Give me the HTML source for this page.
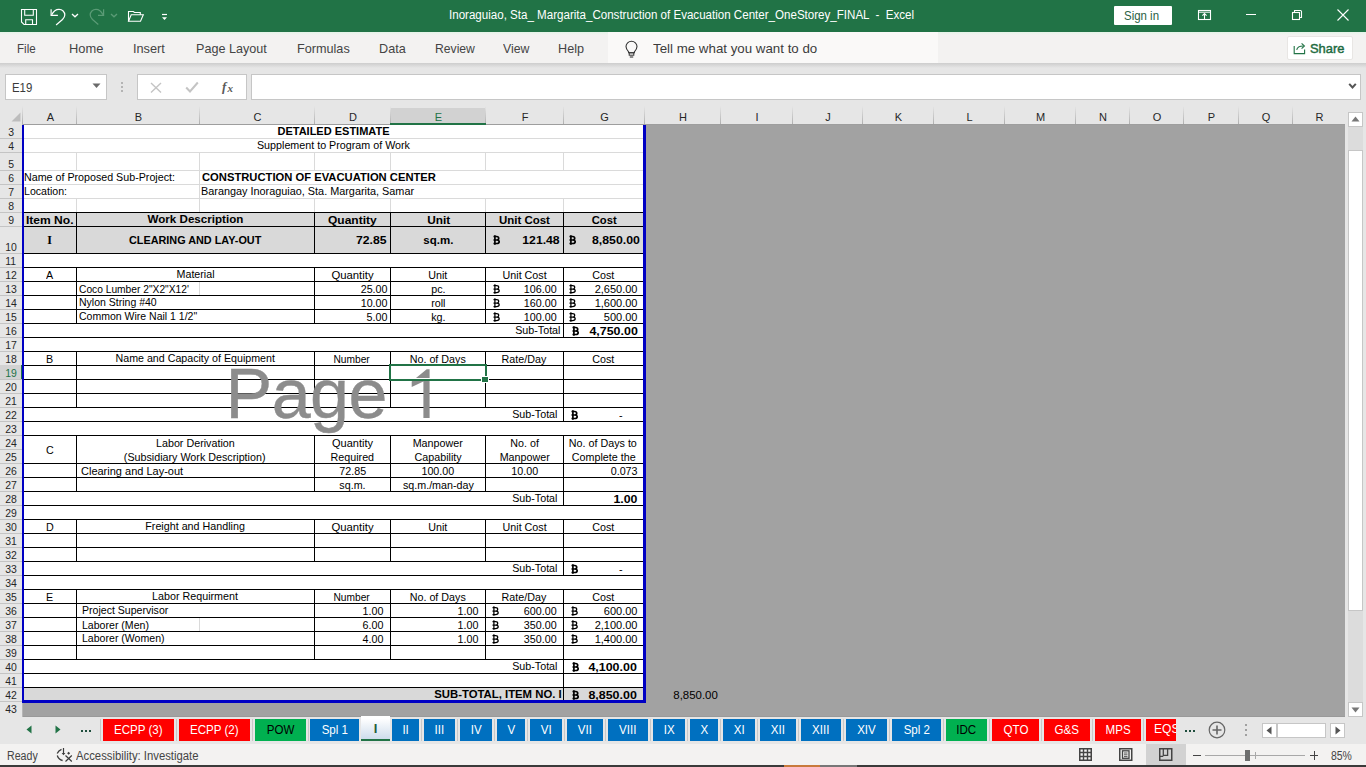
<!DOCTYPE html>
<html><head><meta charset="utf-8"><title>Excel</title>
<style>
html,body{margin:0;padding:0;}
body{width:1366px;height:767px;overflow:hidden;position:relative;background:#e6e6e6;font-family:'Liberation Sans', sans-serif;}
.a{position:absolute;}
.t{position:absolute;white-space:pre;}
</style></head><body>
<div class="a" style="left:0px;top:0px;width:1366px;height:32px;background:#217346;"></div><svg class="a" style="left:20px;top:8px;" width="18" height="18" viewBox="0 0 18 18"><path d="M1.5 1.5 H16.5 V16.5 H4 L1.5 14 Z" fill="none" stroke="#ffffff" stroke-width="1.1"/><path d="M4.7 1.5 V7.2 H13.3 V1.5" fill="none" stroke="#ffffff" stroke-width="1.1"/><path d="M5.7 16.5 V11.8 H12.5 V16.5" fill="none" stroke="#ffffff" stroke-width="1.1"/></svg><svg class="a" style="left:49px;top:8px;" width="18" height="18" viewBox="0 0 18 18"><path d="M2.7 6.8 C 4.5 3, 7.5 1.3, 10 1.3 C 13.3 1.3, 15.8 3.8, 15.8 7 C 15.8 8.8, 15 10, 13.5 11.5 L7.1 17" fill="none" stroke="#ffffff" stroke-width="1.2"/><path d="M2.1 1.3 V7.4 H8.9" fill="none" stroke="#ffffff" stroke-width="1.2"/></svg><svg class="a" style="left:71px;top:12px;" width="8" height="6" viewBox="0 0 8 6"><path d="M1 2 L4 4.8 L7 2" fill="none" stroke="#ffffff" stroke-width="1.3"/></svg><svg class="a" style="left:88px;top:8px;" width="18" height="18" viewBox="0 0 18 18"><path d="M15 6.8 C 13.2 3, 10.5 1.3, 8 1.3 C 4.7 1.3, 2.2 3.8, 2.2 7 C 2.2 8.8, 3 10, 4.5 11.5 L10.3 16.5" fill="none" stroke="#5b9b76" stroke-width="1.2"/><path d="M15.6 1.3 V7.4 H10" fill="none" stroke="#5b9b76" stroke-width="1.2"/></svg><svg class="a" style="left:110px;top:12px;" width="8" height="6" viewBox="0 0 8 6"><path d="M1 2 L4 4.8 L7 2" fill="none" stroke="#5b9b76" stroke-width="1.3"/></svg><svg class="a" style="left:127px;top:9px;" width="18" height="15" viewBox="0 0 18 15"><path d="M1.5 12.3 V2.5 H6.3 L7.5 3.5 H13.3 V5.8" fill="none" stroke="#ffffff" stroke-width="1.1"/><path d="M1.5 12.3 L4.2 5.8 H16.3 L13.5 12.3 Z" fill="none" stroke="#ffffff" stroke-width="1.1"/></svg><svg class="a" style="left:160px;top:12px;" width="10" height="10" viewBox="0 0 10 10"><path d="M2 2.5 H7" stroke="#ffffff" stroke-width="1.2"/><path d="M2 5.2 H7 L4.5 8 Z" fill="#ffffff"/></svg><div class="t" style="left:449px;top:8px;font-family:'Liberation Sans', sans-serif;font-size:12px;font-weight:normal;line-height:14px;color:#ffffff;transform:scaleX(0.964);transform-origin:left top;">Inoraguiao, Sta_ Margarita_Construction of Evacuation Center_OneStorey_FINAL  -  Excel</div><div class="a" style="left:1114px;top:6px;width:58px;height:19px;background:#ffffff;border-radius:1px;"></div><div class="t" style="left:1124px;top:9px;font-family:'Liberation Sans', sans-serif;font-size:12px;font-weight:normal;line-height:14px;color:#2b5f45;transform:scaleX(0.955);transform-origin:left top;">Sign in</div><svg class="a" style="left:1197px;top:9px;" width="15" height="13" viewBox="0 0 15 13"><rect x="1.5" y="1.5" width="12" height="9" fill="none" stroke="#ffffff" stroke-width="1.1"/><path d="M1.5 3.2 H13.5" stroke="#ffffff" stroke-width="1"/><path d="M7.5 10.5 V4.6 M5.4 6.6 L7.5 4.5 L9.6 6.6" fill="none" stroke="#ffffff" stroke-width="1.1"/></svg><div class="a" style="left:1246px;top:14px;width:10px;height:1px;background:#ffffff;"></div><svg class="a" style="left:1291px;top:9px;" width="13" height="13" viewBox="0 0 13 13"><rect x="1.5" y="3.5" width="7" height="7" fill="none" stroke="#ffffff" stroke-width="1.1"/><path d="M3.5 3.5 V1.5 H9.5 Q10.5 1.5 10.5 2.5 V8.5 H8.5" fill="none" stroke="#ffffff" stroke-width="1.1"/></svg><svg class="a" style="left:1337px;top:9px;" width="13" height="13" viewBox="0 0 13 13"><path d="M0.5 0.5 L11.5 11.5 M11.5 0.5 L0.5 11.5" stroke="#ffffff" stroke-width="1.1"/></svg><div class="a" style="left:0px;top:32px;width:1366px;height:31px;background:#f3f2f1;"></div><div class="a" style="left:0px;top:32px;width:1366px;height:3px;background:linear-gradient(#e4f4e8,#f3f2f1);"></div><div class="t" style="left:17px;top:42px;font-family:'Liberation Sans', sans-serif;font-size:13px;font-weight:normal;line-height:14px;color:#444444;transform:scaleX(0.89);transform-origin:left top;">File</div><div class="t" style="left:69px;top:42px;font-family:'Liberation Sans', sans-serif;font-size:13px;font-weight:normal;line-height:14px;color:#444444;transform:scaleX(0.99);transform-origin:left top;">Home</div><div class="t" style="left:133px;top:42px;font-family:'Liberation Sans', sans-serif;font-size:13px;font-weight:normal;line-height:14px;color:#444444;transform:scaleX(0.98);transform-origin:left top;">Insert</div><div class="t" style="left:196px;top:42px;font-family:'Liberation Sans', sans-serif;font-size:13px;font-weight:normal;line-height:14px;color:#444444;transform:scaleX(0.97);transform-origin:left top;">Page Layout</div><div class="t" style="left:297px;top:42px;font-family:'Liberation Sans', sans-serif;font-size:13px;font-weight:normal;line-height:14px;color:#444444;transform:scaleX(0.973);transform-origin:left top;">Formulas</div><div class="t" style="left:379px;top:42px;font-family:'Liberation Sans', sans-serif;font-size:13px;font-weight:normal;line-height:14px;color:#444444;transform:scaleX(0.972);transform-origin:left top;">Data</div><div class="t" style="left:435px;top:42px;font-family:'Liberation Sans', sans-serif;font-size:13px;font-weight:normal;line-height:14px;color:#444444;transform:scaleX(0.936);transform-origin:left top;">Review</div><div class="t" style="left:503px;top:42px;font-family:'Liberation Sans', sans-serif;font-size:13px;font-weight:normal;line-height:14px;color:#444444;transform:scaleX(0.944);transform-origin:left top;">View</div><div class="t" style="left:558px;top:42px;font-family:'Liberation Sans', sans-serif;font-size:13px;font-weight:normal;line-height:14px;color:#444444;transform:scaleX(0.972);transform-origin:left top;">Help</div><div class="a" style="left:608px;top:32px;width:330px;height:31px;background:#faf9f8;"></div><svg class="a" style="left:624px;top:40px;" width="16" height="18" viewBox="0 0 16 18"><path d="M4.6 11.8 C 3 10.2, 2 8.6, 2 6.6 C 2 3.6, 4.5 1.2, 7.5 1.2 C 10.5 1.2, 13 3.6, 13 6.6 C 13 8.6, 12 10.2, 10.4 11.8 V12.8 H4.6 Z" fill="none" stroke="#333" stroke-width="1.1"/><rect x="5.2" y="12.8" width="4.6" height="2.4" fill="none" stroke="#333" stroke-width="1"/><path d="M5.8 17 H9.2" stroke="#333" stroke-width="1.1"/></svg><div class="t" style="left:653px;top:42px;font-family:'Liberation Sans', sans-serif;font-size:13px;font-weight:normal;line-height:14px;color:#3c3c3c;transform:scaleX(1.024);transform-origin:left top;">Tell me what you want to do</div><div class="a" style="left:1287px;top:36px;width:66px;height:24px;background:#ffffff;border:1px solid #e8e6e4;box-sizing:border-box;border-radius:2px;"></div><svg class="a" style="left:1292px;top:41px;" width="16" height="14" viewBox="0 0 16 14"><path d="M2.2 5 V12.6 H12.6 V8.6" fill="none" stroke="#217346" stroke-width="1.1"/><path d="M4.7 8.8 C 5.2 6.2, 7.5 5, 11.5 5" fill="none" stroke="#217346" stroke-width="1.1"/><path d="M9.6 2.4 L12.4 5 L9.6 7.6" fill="none" stroke="#217346" stroke-width="1.1"/></svg><div class="t" style="left:1310px;top:42px;font-family:'Liberation Sans', sans-serif;font-size:13px;font-weight:normal;line-height:14px;color:#1e6b41;transform:scaleX(0.99);transform-origin:left top;-webkit-text-stroke:0.45px #1e6b41;">Share</div><div class="a" style="left:0px;top:63px;width:1366px;height:5px;background:linear-gradient(#cdcdcd,#e6e6e6);"></div><div class="a" style="left:5px;top:74px;width:102px;height:26px;background:#ffffff;border:1px solid #c6c6c6;box-sizing:border-box;"></div><div class="t" style="left:12px;top:81px;font-family:'Liberation Sans', sans-serif;font-size:12px;font-weight:normal;line-height:14px;color:#3a3a3a;transform:scaleX(0.95);transform-origin:left top;">E19</div><svg class="a" style="left:92px;top:83px;" width="9" height="6" viewBox="0 0 9 6"><path d="M0.5 0.5 H8.5 L4.5 5 Z" fill="#6a6a6a"/></svg><div class="a" style="left:121px;top:82px;width:2px;height:2px;background:#b4b4b4;"></div><div class="a" style="left:121px;top:86px;width:2px;height:2px;background:#b4b4b4;"></div><div class="a" style="left:121px;top:90px;width:2px;height:2px;background:#b4b4b4;"></div><div class="a" style="left:137px;top:74px;width:110px;height:26px;background:#ffffff;border:1px solid #c6c6c6;box-sizing:border-box;"></div><svg class="a" style="left:150px;top:82px;" width="12" height="11" viewBox="0 0 12 11"><path d="M1 1 L11 10.5 M11 1 L1 10.5" stroke="#c4c4c4" stroke-width="1.4"/></svg><svg class="a" style="left:185px;top:81px;" width="14" height="12" viewBox="0 0 14 12"><path d="M1.2 6.5 L5 10.5 L12.8 1.5" fill="none" stroke="#c4c4c4" stroke-width="2"/></svg><div class="t" style="left:222px;top:80px;font-family:'Liberation Serif', serif;font-size:13px;font-weight:bold;line-height:14px;color:#5a5a5a;font-style:italic;">f</div><div class="t" style="left:227.5px;top:81px;font-family:'Liberation Serif', serif;font-size:11px;font-weight:bold;line-height:14px;color:#5a5a5a;font-style:italic;">x</div><div class="a" style="left:251px;top:74px;width:1110px;height:26px;background:#ffffff;border:1px solid #c6c6c6;box-sizing:border-box;"></div><svg class="a" style="left:1348px;top:82px;" width="9" height="8" viewBox="0 0 9 8"><path d="M1.2 1.8 L4.5 5.5 L7.8 1.8" fill="none" stroke="#555" stroke-width="2"/></svg><div class="a" style="left:0px;top:108px;width:1345px;height:17px;background:#e6e6e6;"></div><div class="a" style="left:390px;top:108px;width:95px;height:17px;background:#d2d2d2;"></div><div class="a" style="left:390px;top:123px;width:96px;height:2px;background:#217346;"></div><div class="t" style="left:-249.5px;width:600px;text-align:center;top:110px;font-family:'Liberation Sans', sans-serif;font-size:11px;font-weight:normal;line-height:14px;color:#262626;"><span style="display:inline-block;">A</span></div><div class="t" style="left:-161.5px;width:600px;text-align:center;top:110px;font-family:'Liberation Sans', sans-serif;font-size:11px;font-weight:normal;line-height:14px;color:#262626;"><span style="display:inline-block;">B</span></div><div class="a" style="left:76px;top:106px;width:1px;height:18px;background:linear-gradient(#e6e6e6,#b0b0b0);"></div><div class="t" style="left:-42.5px;width:600px;text-align:center;top:110px;font-family:'Liberation Sans', sans-serif;font-size:11px;font-weight:normal;line-height:14px;color:#262626;"><span style="display:inline-block;">C</span></div><div class="a" style="left:199px;top:106px;width:1px;height:18px;background:linear-gradient(#e6e6e6,#b0b0b0);"></div><div class="t" style="left:53.0px;width:600px;text-align:center;top:110px;font-family:'Liberation Sans', sans-serif;font-size:11px;font-weight:normal;line-height:14px;color:#262626;"><span style="display:inline-block;">D</span></div><div class="a" style="left:314px;top:106px;width:1px;height:18px;background:linear-gradient(#e6e6e6,#b0b0b0);"></div><div class="t" style="left:138.5px;width:600px;text-align:center;top:110px;font-family:'Liberation Sans', sans-serif;font-size:11px;font-weight:normal;line-height:14px;color:#217346;"><span style="display:inline-block;">E</span></div><div class="a" style="left:390px;top:106px;width:1px;height:18px;background:linear-gradient(#e6e6e6,#b0b0b0);"></div><div class="t" style="left:225.0px;width:600px;text-align:center;top:110px;font-family:'Liberation Sans', sans-serif;font-size:11px;font-weight:normal;line-height:14px;color:#262626;"><span style="display:inline-block;">F</span></div><div class="a" style="left:485px;top:106px;width:1px;height:18px;background:linear-gradient(#e6e6e6,#b0b0b0);"></div><div class="t" style="left:304.5px;width:600px;text-align:center;top:110px;font-family:'Liberation Sans', sans-serif;font-size:11px;font-weight:normal;line-height:14px;color:#262626;"><span style="display:inline-block;">G</span></div><div class="a" style="left:563px;top:106px;width:1px;height:18px;background:linear-gradient(#e6e6e6,#b0b0b0);"></div><div class="t" style="left:383.0px;width:600px;text-align:center;top:110px;font-family:'Liberation Sans', sans-serif;font-size:11px;font-weight:normal;line-height:14px;color:#262626;"><span style="display:inline-block;">H</span></div><div class="a" style="left:644px;top:106px;width:1px;height:18px;background:linear-gradient(#e6e6e6,#b0b0b0);"></div><div class="t" style="left:457.0px;width:600px;text-align:center;top:110px;font-family:'Liberation Sans', sans-serif;font-size:11px;font-weight:normal;line-height:14px;color:#262626;"><span style="display:inline-block;">I</span></div><div class="a" style="left:720px;top:106px;width:1px;height:18px;background:linear-gradient(#e6e6e6,#b0b0b0);"></div><div class="t" style="left:528.0px;width:600px;text-align:center;top:110px;font-family:'Liberation Sans', sans-serif;font-size:11px;font-weight:normal;line-height:14px;color:#262626;"><span style="display:inline-block;">J</span></div><div class="a" style="left:792px;top:106px;width:1px;height:18px;background:linear-gradient(#e6e6e6,#b0b0b0);"></div><div class="t" style="left:598.5px;width:600px;text-align:center;top:110px;font-family:'Liberation Sans', sans-serif;font-size:11px;font-weight:normal;line-height:14px;color:#262626;"><span style="display:inline-block;">K</span></div><div class="a" style="left:862px;top:106px;width:1px;height:18px;background:linear-gradient(#e6e6e6,#b0b0b0);"></div><div class="t" style="left:669.5px;width:600px;text-align:center;top:110px;font-family:'Liberation Sans', sans-serif;font-size:11px;font-weight:normal;line-height:14px;color:#262626;"><span style="display:inline-block;">L</span></div><div class="a" style="left:933px;top:106px;width:1px;height:18px;background:linear-gradient(#e6e6e6,#b0b0b0);"></div><div class="t" style="left:740.5px;width:600px;text-align:center;top:110px;font-family:'Liberation Sans', sans-serif;font-size:11px;font-weight:normal;line-height:14px;color:#262626;"><span style="display:inline-block;">M</span></div><div class="a" style="left:1004px;top:106px;width:1px;height:18px;background:linear-gradient(#e6e6e6,#b0b0b0);"></div><div class="t" style="left:803.0px;width:600px;text-align:center;top:110px;font-family:'Liberation Sans', sans-serif;font-size:11px;font-weight:normal;line-height:14px;color:#262626;"><span style="display:inline-block;">N</span></div><div class="a" style="left:1075px;top:106px;width:1px;height:18px;background:linear-gradient(#e6e6e6,#b0b0b0);"></div><div class="t" style="left:857.0px;width:600px;text-align:center;top:110px;font-family:'Liberation Sans', sans-serif;font-size:11px;font-weight:normal;line-height:14px;color:#262626;"><span style="display:inline-block;">O</span></div><div class="a" style="left:1129px;top:106px;width:1px;height:18px;background:linear-gradient(#e6e6e6,#b0b0b0);"></div><div class="t" style="left:911.5px;width:600px;text-align:center;top:110px;font-family:'Liberation Sans', sans-serif;font-size:11px;font-weight:normal;line-height:14px;color:#262626;"><span style="display:inline-block;">P</span></div><div class="a" style="left:1183px;top:106px;width:1px;height:18px;background:linear-gradient(#e6e6e6,#b0b0b0);"></div><div class="t" style="left:966.0px;width:600px;text-align:center;top:110px;font-family:'Liberation Sans', sans-serif;font-size:11px;font-weight:normal;line-height:14px;color:#262626;"><span style="display:inline-block;">Q</span></div><div class="a" style="left:1238px;top:106px;width:1px;height:18px;background:linear-gradient(#e6e6e6,#b0b0b0);"></div><div class="t" style="left:1019.5px;width:600px;text-align:center;top:110px;font-family:'Liberation Sans', sans-serif;font-size:11px;font-weight:normal;line-height:14px;color:#262626;"><span style="display:inline-block;">R</span></div><div class="a" style="left:1292px;top:106px;width:1px;height:18px;background:linear-gradient(#e6e6e6,#b0b0b0);"></div><div class="a" style="left:22px;top:106px;width:1px;height:18px;background:linear-gradient(#e6e6e6,#b0b0b0);"></div><div class="a" style="left:0px;top:124px;width:1345px;height:1px;background:#9e9e9e;"></div><div class="a" style="left:390px;top:123px;width:96px;height:2px;background:#217346;"></div><svg class="a" style="left:11px;top:112px;" width="10" height="10" viewBox="0 0 10 10"><path d="M9.5 0.5 V9.5 H0.5 Z" fill="#bdbdbd"/></svg><div class="a" style="left:23px;top:125px;width:1322px;height:592px;background:#a2a2a2;"></div><div class="a" style="left:23px;top:716px;width:1322px;height:1px;background:#999999;"></div><div class="a" style="left:24px;top:125px;width:619px;height:575px;background:#ffffff;"></div><div class="a" style="left:24px;top:213px;width:619px;height:40px;background:#d9d9d9;"></div><div class="a" style="left:24px;top:688px;width:619px;height:12px;background:#d9d9d9;"></div><div class="a" style="left:0px;top:124px;width:22px;height:593px;background:#e6e6e6;"></div><div class="t" style="left:-289px;width:600px;text-align:center;top:125px;font-family:'Liberation Sans', sans-serif;font-size:11px;font-weight:normal;line-height:14px;color:#262626;"><span style="display:inline-block;transform:scaleX(0.95);transform-origin:center top;">3</span></div><div class="a" style="left:0px;top:138px;width:22px;height:1px;background:#c4c4c4;"></div><div class="t" style="left:-289px;width:600px;text-align:center;top:139px;font-family:'Liberation Sans', sans-serif;font-size:11px;font-weight:normal;line-height:14px;color:#262626;"><span style="display:inline-block;transform:scaleX(0.95);transform-origin:center top;">4</span></div><div class="a" style="left:0px;top:152px;width:22px;height:1px;background:#c4c4c4;"></div><div class="t" style="left:-289px;width:600px;text-align:center;top:157px;font-family:'Liberation Sans', sans-serif;font-size:11px;font-weight:normal;line-height:14px;color:#262626;"><span style="display:inline-block;transform:scaleX(0.95);transform-origin:center top;">5</span></div><div class="a" style="left:0px;top:170px;width:22px;height:1px;background:#c4c4c4;"></div><div class="t" style="left:-289px;width:600px;text-align:center;top:171px;font-family:'Liberation Sans', sans-serif;font-size:11px;font-weight:normal;line-height:14px;color:#262626;"><span style="display:inline-block;transform:scaleX(0.95);transform-origin:center top;">6</span></div><div class="a" style="left:0px;top:184px;width:22px;height:1px;background:#c4c4c4;"></div><div class="t" style="left:-289px;width:600px;text-align:center;top:185px;font-family:'Liberation Sans', sans-serif;font-size:11px;font-weight:normal;line-height:14px;color:#262626;"><span style="display:inline-block;transform:scaleX(0.95);transform-origin:center top;">7</span></div><div class="a" style="left:0px;top:198px;width:22px;height:1px;background:#c4c4c4;"></div><div class="t" style="left:-289px;width:600px;text-align:center;top:199px;font-family:'Liberation Sans', sans-serif;font-size:11px;font-weight:normal;line-height:14px;color:#262626;"><span style="display:inline-block;transform:scaleX(0.95);transform-origin:center top;">8</span></div><div class="a" style="left:0px;top:212px;width:22px;height:1px;background:#c4c4c4;"></div><div class="t" style="left:-289px;width:600px;text-align:center;top:213px;font-family:'Liberation Sans', sans-serif;font-size:11px;font-weight:normal;line-height:14px;color:#262626;"><span style="display:inline-block;transform:scaleX(0.95);transform-origin:center top;">9</span></div><div class="a" style="left:0px;top:226px;width:22px;height:1px;background:#c4c4c4;"></div><div class="t" style="left:-289px;width:600px;text-align:center;top:240px;font-family:'Liberation Sans', sans-serif;font-size:11px;font-weight:normal;line-height:14px;color:#262626;"><span style="display:inline-block;transform:scaleX(0.95);transform-origin:center top;">10</span></div><div class="a" style="left:0px;top:253px;width:22px;height:1px;background:#c4c4c4;"></div><div class="t" style="left:-289px;width:600px;text-align:center;top:254px;font-family:'Liberation Sans', sans-serif;font-size:11px;font-weight:normal;line-height:14px;color:#262626;"><span style="display:inline-block;transform:scaleX(0.95);transform-origin:center top;">11</span></div><div class="a" style="left:0px;top:267px;width:22px;height:1px;background:#c4c4c4;"></div><div class="t" style="left:-289px;width:600px;text-align:center;top:268px;font-family:'Liberation Sans', sans-serif;font-size:11px;font-weight:normal;line-height:14px;color:#262626;"><span style="display:inline-block;transform:scaleX(0.95);transform-origin:center top;">12</span></div><div class="a" style="left:0px;top:281px;width:22px;height:1px;background:#c4c4c4;"></div><div class="t" style="left:-289px;width:600px;text-align:center;top:282px;font-family:'Liberation Sans', sans-serif;font-size:11px;font-weight:normal;line-height:14px;color:#262626;"><span style="display:inline-block;transform:scaleX(0.95);transform-origin:center top;">13</span></div><div class="a" style="left:0px;top:295px;width:22px;height:1px;background:#c4c4c4;"></div><div class="t" style="left:-289px;width:600px;text-align:center;top:296px;font-family:'Liberation Sans', sans-serif;font-size:11px;font-weight:normal;line-height:14px;color:#262626;"><span style="display:inline-block;transform:scaleX(0.95);transform-origin:center top;">14</span></div><div class="a" style="left:0px;top:309px;width:22px;height:1px;background:#c4c4c4;"></div><div class="t" style="left:-289px;width:600px;text-align:center;top:310px;font-family:'Liberation Sans', sans-serif;font-size:11px;font-weight:normal;line-height:14px;color:#262626;"><span style="display:inline-block;transform:scaleX(0.95);transform-origin:center top;">15</span></div><div class="a" style="left:0px;top:323px;width:22px;height:1px;background:#c4c4c4;"></div><div class="t" style="left:-289px;width:600px;text-align:center;top:324px;font-family:'Liberation Sans', sans-serif;font-size:11px;font-weight:normal;line-height:14px;color:#262626;"><span style="display:inline-block;transform:scaleX(0.95);transform-origin:center top;">16</span></div><div class="a" style="left:0px;top:337px;width:22px;height:1px;background:#c4c4c4;"></div><div class="t" style="left:-289px;width:600px;text-align:center;top:338px;font-family:'Liberation Sans', sans-serif;font-size:11px;font-weight:normal;line-height:14px;color:#262626;"><span style="display:inline-block;transform:scaleX(0.95);transform-origin:center top;">17</span></div><div class="a" style="left:0px;top:351px;width:22px;height:1px;background:#c4c4c4;"></div><div class="t" style="left:-289px;width:600px;text-align:center;top:352px;font-family:'Liberation Sans', sans-serif;font-size:11px;font-weight:normal;line-height:14px;color:#262626;"><span style="display:inline-block;transform:scaleX(0.95);transform-origin:center top;">18</span></div><div class="a" style="left:0px;top:365px;width:22px;height:1px;background:#c4c4c4;"></div><div class="a" style="left:0px;top:365px;width:21px;height:14px;background:#d2d2d2;"></div><div class="a" style="left:21px;top:365px;width:1px;height:14px;background:#217346;"></div><div class="t" style="left:-289px;width:600px;text-align:center;top:366px;font-family:'Liberation Sans', sans-serif;font-size:11px;font-weight:normal;line-height:14px;color:#217346;"><span style="display:inline-block;transform:scaleX(0.95);transform-origin:center top;">19</span></div><div class="a" style="left:0px;top:379px;width:22px;height:1px;background:#c4c4c4;"></div><div class="t" style="left:-289px;width:600px;text-align:center;top:380px;font-family:'Liberation Sans', sans-serif;font-size:11px;font-weight:normal;line-height:14px;color:#262626;"><span style="display:inline-block;transform:scaleX(0.95);transform-origin:center top;">20</span></div><div class="a" style="left:0px;top:393px;width:22px;height:1px;background:#c4c4c4;"></div><div class="t" style="left:-289px;width:600px;text-align:center;top:394px;font-family:'Liberation Sans', sans-serif;font-size:11px;font-weight:normal;line-height:14px;color:#262626;"><span style="display:inline-block;transform:scaleX(0.95);transform-origin:center top;">21</span></div><div class="a" style="left:0px;top:407px;width:22px;height:1px;background:#c4c4c4;"></div><div class="t" style="left:-289px;width:600px;text-align:center;top:408px;font-family:'Liberation Sans', sans-serif;font-size:11px;font-weight:normal;line-height:14px;color:#262626;"><span style="display:inline-block;transform:scaleX(0.95);transform-origin:center top;">22</span></div><div class="a" style="left:0px;top:421px;width:22px;height:1px;background:#c4c4c4;"></div><div class="t" style="left:-289px;width:600px;text-align:center;top:422px;font-family:'Liberation Sans', sans-serif;font-size:11px;font-weight:normal;line-height:14px;color:#262626;"><span style="display:inline-block;transform:scaleX(0.95);transform-origin:center top;">23</span></div><div class="a" style="left:0px;top:435px;width:22px;height:1px;background:#c4c4c4;"></div><div class="t" style="left:-289px;width:600px;text-align:center;top:436px;font-family:'Liberation Sans', sans-serif;font-size:11px;font-weight:normal;line-height:14px;color:#262626;"><span style="display:inline-block;transform:scaleX(0.95);transform-origin:center top;">24</span></div><div class="a" style="left:0px;top:449px;width:22px;height:1px;background:#c4c4c4;"></div><div class="t" style="left:-289px;width:600px;text-align:center;top:450px;font-family:'Liberation Sans', sans-serif;font-size:11px;font-weight:normal;line-height:14px;color:#262626;"><span style="display:inline-block;transform:scaleX(0.95);transform-origin:center top;">25</span></div><div class="a" style="left:0px;top:463px;width:22px;height:1px;background:#c4c4c4;"></div><div class="t" style="left:-289px;width:600px;text-align:center;top:464px;font-family:'Liberation Sans', sans-serif;font-size:11px;font-weight:normal;line-height:14px;color:#262626;"><span style="display:inline-block;transform:scaleX(0.95);transform-origin:center top;">26</span></div><div class="a" style="left:0px;top:477px;width:22px;height:1px;background:#c4c4c4;"></div><div class="t" style="left:-289px;width:600px;text-align:center;top:478px;font-family:'Liberation Sans', sans-serif;font-size:11px;font-weight:normal;line-height:14px;color:#262626;"><span style="display:inline-block;transform:scaleX(0.95);transform-origin:center top;">27</span></div><div class="a" style="left:0px;top:491px;width:22px;height:1px;background:#c4c4c4;"></div><div class="t" style="left:-289px;width:600px;text-align:center;top:492px;font-family:'Liberation Sans', sans-serif;font-size:11px;font-weight:normal;line-height:14px;color:#262626;"><span style="display:inline-block;transform:scaleX(0.95);transform-origin:center top;">28</span></div><div class="a" style="left:0px;top:505px;width:22px;height:1px;background:#c4c4c4;"></div><div class="t" style="left:-289px;width:600px;text-align:center;top:506px;font-family:'Liberation Sans', sans-serif;font-size:11px;font-weight:normal;line-height:14px;color:#262626;"><span style="display:inline-block;transform:scaleX(0.95);transform-origin:center top;">29</span></div><div class="a" style="left:0px;top:519px;width:22px;height:1px;background:#c4c4c4;"></div><div class="t" style="left:-289px;width:600px;text-align:center;top:520px;font-family:'Liberation Sans', sans-serif;font-size:11px;font-weight:normal;line-height:14px;color:#262626;"><span style="display:inline-block;transform:scaleX(0.95);transform-origin:center top;">30</span></div><div class="a" style="left:0px;top:533px;width:22px;height:1px;background:#c4c4c4;"></div><div class="t" style="left:-289px;width:600px;text-align:center;top:534px;font-family:'Liberation Sans', sans-serif;font-size:11px;font-weight:normal;line-height:14px;color:#262626;"><span style="display:inline-block;transform:scaleX(0.95);transform-origin:center top;">31</span></div><div class="a" style="left:0px;top:547px;width:22px;height:1px;background:#c4c4c4;"></div><div class="t" style="left:-289px;width:600px;text-align:center;top:548px;font-family:'Liberation Sans', sans-serif;font-size:11px;font-weight:normal;line-height:14px;color:#262626;"><span style="display:inline-block;transform:scaleX(0.95);transform-origin:center top;">32</span></div><div class="a" style="left:0px;top:561px;width:22px;height:1px;background:#c4c4c4;"></div><div class="t" style="left:-289px;width:600px;text-align:center;top:562px;font-family:'Liberation Sans', sans-serif;font-size:11px;font-weight:normal;line-height:14px;color:#262626;"><span style="display:inline-block;transform:scaleX(0.95);transform-origin:center top;">33</span></div><div class="a" style="left:0px;top:575px;width:22px;height:1px;background:#c4c4c4;"></div><div class="t" style="left:-289px;width:600px;text-align:center;top:576px;font-family:'Liberation Sans', sans-serif;font-size:11px;font-weight:normal;line-height:14px;color:#262626;"><span style="display:inline-block;transform:scaleX(0.95);transform-origin:center top;">34</span></div><div class="a" style="left:0px;top:589px;width:22px;height:1px;background:#c4c4c4;"></div><div class="t" style="left:-289px;width:600px;text-align:center;top:590px;font-family:'Liberation Sans', sans-serif;font-size:11px;font-weight:normal;line-height:14px;color:#262626;"><span style="display:inline-block;transform:scaleX(0.95);transform-origin:center top;">35</span></div><div class="a" style="left:0px;top:603px;width:22px;height:1px;background:#c4c4c4;"></div><div class="t" style="left:-289px;width:600px;text-align:center;top:604px;font-family:'Liberation Sans', sans-serif;font-size:11px;font-weight:normal;line-height:14px;color:#262626;"><span style="display:inline-block;transform:scaleX(0.95);transform-origin:center top;">36</span></div><div class="a" style="left:0px;top:617px;width:22px;height:1px;background:#c4c4c4;"></div><div class="t" style="left:-289px;width:600px;text-align:center;top:618px;font-family:'Liberation Sans', sans-serif;font-size:11px;font-weight:normal;line-height:14px;color:#262626;"><span style="display:inline-block;transform:scaleX(0.95);transform-origin:center top;">37</span></div><div class="a" style="left:0px;top:631px;width:22px;height:1px;background:#c4c4c4;"></div><div class="t" style="left:-289px;width:600px;text-align:center;top:632px;font-family:'Liberation Sans', sans-serif;font-size:11px;font-weight:normal;line-height:14px;color:#262626;"><span style="display:inline-block;transform:scaleX(0.95);transform-origin:center top;">38</span></div><div class="a" style="left:0px;top:645px;width:22px;height:1px;background:#c4c4c4;"></div><div class="t" style="left:-289px;width:600px;text-align:center;top:646px;font-family:'Liberation Sans', sans-serif;font-size:11px;font-weight:normal;line-height:14px;color:#262626;"><span style="display:inline-block;transform:scaleX(0.95);transform-origin:center top;">39</span></div><div class="a" style="left:0px;top:659px;width:22px;height:1px;background:#c4c4c4;"></div><div class="t" style="left:-289px;width:600px;text-align:center;top:660px;font-family:'Liberation Sans', sans-serif;font-size:11px;font-weight:normal;line-height:14px;color:#262626;"><span style="display:inline-block;transform:scaleX(0.95);transform-origin:center top;">40</span></div><div class="a" style="left:0px;top:673px;width:22px;height:1px;background:#c4c4c4;"></div><div class="t" style="left:-289px;width:600px;text-align:center;top:674px;font-family:'Liberation Sans', sans-serif;font-size:11px;font-weight:normal;line-height:14px;color:#262626;"><span style="display:inline-block;transform:scaleX(0.95);transform-origin:center top;">41</span></div><div class="a" style="left:0px;top:687px;width:22px;height:1px;background:#c4c4c4;"></div><div class="t" style="left:-289px;width:600px;text-align:center;top:688px;font-family:'Liberation Sans', sans-serif;font-size:11px;font-weight:normal;line-height:14px;color:#262626;"><span style="display:inline-block;transform:scaleX(0.95);transform-origin:center top;">42</span></div><div class="a" style="left:0px;top:701px;width:22px;height:1px;background:#c4c4c4;"></div><div class="t" style="left:-289px;width:600px;text-align:center;top:702px;font-family:'Liberation Sans', sans-serif;font-size:11px;font-weight:normal;line-height:14px;color:#262626;"><span style="display:inline-block;transform:scaleX(0.95);transform-origin:center top;">43</span></div><div class="a" style="left:0px;top:717px;width:22px;height:1px;background:#c4c4c4;"></div><div class="a" style="left:22px;top:124px;width:1px;height:593px;background:#b5b5b5;"></div><div class="a" style="left:24px;top:138px;width:619px;height:1px;background:#dadada;"></div><div class="a" style="left:24px;top:152px;width:619px;height:1px;background:#dadada;"></div><div class="a" style="left:24px;top:170px;width:619px;height:1px;background:#dadada;"></div><div class="a" style="left:24px;top:184px;width:619px;height:1px;background:#dadada;"></div><div class="a" style="left:24px;top:198px;width:619px;height:1px;background:#dadada;"></div><div class="a" style="left:76px;top:152px;width:1px;height:18px;background:#dadada;"></div><div class="a" style="left:199px;top:152px;width:1px;height:18px;background:#dadada;"></div><div class="a" style="left:314px;top:152px;width:1px;height:18px;background:#dadada;"></div><div class="a" style="left:390px;top:152px;width:1px;height:18px;background:#dadada;"></div><div class="a" style="left:485px;top:152px;width:1px;height:18px;background:#dadada;"></div><div class="a" style="left:563px;top:152px;width:1px;height:18px;background:#dadada;"></div><div class="a" style="left:76px;top:198px;width:1px;height:14px;background:#dadada;"></div><div class="a" style="left:199px;top:198px;width:1px;height:14px;background:#dadada;"></div><div class="a" style="left:314px;top:198px;width:1px;height:14px;background:#dadada;"></div><div class="a" style="left:390px;top:198px;width:1px;height:14px;background:#dadada;"></div><div class="a" style="left:485px;top:198px;width:1px;height:14px;background:#dadada;"></div><div class="a" style="left:563px;top:198px;width:1px;height:14px;background:#dadada;"></div><div class="a" style="left:199px;top:170px;width:1px;height:28px;background:#dadada;"></div><div class="a" style="left:199px;top:282px;width:1px;height:13px;background:#dadada;"></div><div class="a" style="left:199px;top:618px;width:1px;height:13px;background:#dadada;"></div><div class="a" style="left:24px;top:212px;width:619px;height:1px;background:#000;"></div><div class="a" style="left:24px;top:226px;width:619px;height:1px;background:#000;"></div><div class="a" style="left:24px;top:253px;width:619px;height:1px;background:#000;"></div><div class="a" style="left:24px;top:267px;width:619px;height:1px;background:#000;"></div><div class="a" style="left:24px;top:281px;width:619px;height:1px;background:#000;"></div><div class="a" style="left:24px;top:295px;width:619px;height:1px;background:#000;"></div><div class="a" style="left:24px;top:309px;width:619px;height:1px;background:#000;"></div><div class="a" style="left:24px;top:323px;width:619px;height:1px;background:#000;"></div><div class="a" style="left:24px;top:337px;width:619px;height:1px;background:#000;"></div><div class="a" style="left:24px;top:351px;width:619px;height:1px;background:#000;"></div><div class="a" style="left:24px;top:365px;width:619px;height:1px;background:#000;"></div><div class="a" style="left:24px;top:379px;width:619px;height:1px;background:#000;"></div><div class="a" style="left:24px;top:393px;width:619px;height:1px;background:#000;"></div><div class="a" style="left:24px;top:407px;width:619px;height:1px;background:#000;"></div><div class="a" style="left:24px;top:421px;width:619px;height:1px;background:#000;"></div><div class="a" style="left:24px;top:435px;width:619px;height:1px;background:#000;"></div><div class="a" style="left:24px;top:463px;width:619px;height:1px;background:#000;"></div><div class="a" style="left:24px;top:477px;width:619px;height:1px;background:#000;"></div><div class="a" style="left:24px;top:491px;width:619px;height:1px;background:#000;"></div><div class="a" style="left:24px;top:505px;width:619px;height:1px;background:#000;"></div><div class="a" style="left:24px;top:519px;width:619px;height:1px;background:#000;"></div><div class="a" style="left:24px;top:533px;width:619px;height:1px;background:#000;"></div><div class="a" style="left:24px;top:547px;width:619px;height:1px;background:#000;"></div><div class="a" style="left:24px;top:561px;width:619px;height:1px;background:#000;"></div><div class="a" style="left:24px;top:575px;width:619px;height:1px;background:#000;"></div><div class="a" style="left:24px;top:589px;width:619px;height:1px;background:#000;"></div><div class="a" style="left:24px;top:603px;width:619px;height:1px;background:#000;"></div><div class="a" style="left:24px;top:617px;width:619px;height:1px;background:#000;"></div><div class="a" style="left:24px;top:631px;width:619px;height:1px;background:#000;"></div><div class="a" style="left:24px;top:645px;width:619px;height:1px;background:#000;"></div><div class="a" style="left:24px;top:659px;width:619px;height:1px;background:#000;"></div><div class="a" style="left:24px;top:673px;width:619px;height:1px;background:#000;"></div><div class="a" style="left:24px;top:687px;width:619px;height:1px;background:#000;"></div><div class="a" style="left:76px;top:212px;width:1px;height:42px;background:#000;"></div><div class="a" style="left:314px;top:212px;width:1px;height:42px;background:#000;"></div><div class="a" style="left:390px;top:212px;width:1px;height:42px;background:#000;"></div><div class="a" style="left:485px;top:212px;width:1px;height:42px;background:#000;"></div><div class="a" style="left:76px;top:267px;width:1px;height:57px;background:#000;"></div><div class="a" style="left:314px;top:267px;width:1px;height:57px;background:#000;"></div><div class="a" style="left:390px;top:267px;width:1px;height:57px;background:#000;"></div><div class="a" style="left:485px;top:267px;width:1px;height:57px;background:#000;"></div><div class="a" style="left:76px;top:351px;width:1px;height:57px;background:#000;"></div><div class="a" style="left:314px;top:351px;width:1px;height:57px;background:#000;"></div><div class="a" style="left:390px;top:351px;width:1px;height:57px;background:#000;"></div><div class="a" style="left:485px;top:351px;width:1px;height:57px;background:#000;"></div><div class="a" style="left:76px;top:435px;width:1px;height:57px;background:#000;"></div><div class="a" style="left:314px;top:435px;width:1px;height:57px;background:#000;"></div><div class="a" style="left:390px;top:435px;width:1px;height:57px;background:#000;"></div><div class="a" style="left:485px;top:435px;width:1px;height:57px;background:#000;"></div><div class="a" style="left:76px;top:519px;width:1px;height:43px;background:#000;"></div><div class="a" style="left:314px;top:519px;width:1px;height:43px;background:#000;"></div><div class="a" style="left:390px;top:519px;width:1px;height:43px;background:#000;"></div><div class="a" style="left:485px;top:519px;width:1px;height:43px;background:#000;"></div><div class="a" style="left:76px;top:589px;width:1px;height:71px;background:#000;"></div><div class="a" style="left:314px;top:589px;width:1px;height:71px;background:#000;"></div><div class="a" style="left:390px;top:589px;width:1px;height:71px;background:#000;"></div><div class="a" style="left:485px;top:589px;width:1px;height:71px;background:#000;"></div><div class="a" style="left:563px;top:212px;width:1px;height:42px;background:#000;"></div><div class="a" style="left:563px;top:267px;width:1px;height:71px;background:#000;"></div><div class="a" style="left:563px;top:351px;width:1px;height:71px;background:#000;"></div><div class="a" style="left:563px;top:435px;width:1px;height:71px;background:#000;"></div><div class="a" style="left:563px;top:519px;width:1px;height:57px;background:#000;"></div><div class="a" style="left:563px;top:589px;width:1px;height:113px;background:#000;"></div><div class="t" style="left:33.5px;width:600px;text-align:center;top:124px;font-family:'Liberation Sans', sans-serif;font-size:11px;font-weight:bold;line-height:14px;color:#000;"><span style="display:inline-block;">DETAILED ESTIMATE</span></div><div class="t" style="left:33px;width:600px;text-align:center;top:138px;font-family:'Liberation Sans', sans-serif;font-size:11px;font-weight:normal;line-height:14px;color:#000;"><span style="display:inline-block;transform:scaleX(0.975);transform-origin:center top;">Supplement to Program of Work</span></div><div class="t" style="left:24px;top:170px;font-family:'Liberation Sans', sans-serif;font-size:11px;font-weight:normal;line-height:14px;color:#000;transform:scaleX(0.972);transform-origin:left top;">Name of Proposed Sub-Project:</div><div class="t" style="left:24px;top:184px;font-family:'Liberation Sans', sans-serif;font-size:11px;font-weight:normal;line-height:14px;color:#000;transform:scaleX(0.963);transform-origin:left top;">Location:</div><div class="t" style="left:202px;top:170px;font-family:'Liberation Sans', sans-serif;font-size:11px;font-weight:bold;line-height:14px;color:#000;transform:scaleX(1.02);transform-origin:left top;">CONSTRUCTION OF EVACUATION CENTER</div><div class="t" style="left:201px;top:184px;font-family:'Liberation Sans', sans-serif;font-size:11px;font-weight:normal;line-height:14px;color:#000;transform:scaleX(0.987);transform-origin:left top;">Barangay Inoraguiao, Sta. Margarita, Samar</div><div class="t" style="left:-250px;width:600px;text-align:center;top:213px;font-family:'Liberation Sans', sans-serif;font-size:11px;font-weight:bold;line-height:14px;color:#000;"><span style="display:inline-block;transform:scaleX(1.097);transform-origin:center top;">Item No.</span></div><div class="t" style="left:-104.5px;width:600px;text-align:center;top:212px;font-family:'Liberation Sans', sans-serif;font-size:11px;font-weight:bold;line-height:14px;color:#000;"><span style="display:inline-block;transform:scaleX(1.054);transform-origin:center top;">Work Description</span></div><div class="t" style="left:52.5px;width:600px;text-align:center;top:213px;font-family:'Liberation Sans', sans-serif;font-size:11px;font-weight:bold;line-height:14px;color:#000;"><span style="display:inline-block;transform:scaleX(1.09);transform-origin:center top;">Quantity</span></div><div class="t" style="left:138.5px;width:600px;text-align:center;top:213px;font-family:'Liberation Sans', sans-serif;font-size:11px;font-weight:bold;line-height:14px;color:#000;"><span style="display:inline-block;transform:scaleX(1.075);transform-origin:center top;">Unit</span></div><div class="t" style="left:224.5px;width:600px;text-align:center;top:213px;font-family:'Liberation Sans', sans-serif;font-size:11px;font-weight:bold;line-height:14px;color:#000;"><span style="display:inline-block;transform:scaleX(1.043);transform-origin:center top;">Unit Cost</span></div><div class="t" style="left:304.5px;width:600px;text-align:center;top:213px;font-family:'Liberation Sans', sans-serif;font-size:11px;font-weight:bold;line-height:14px;color:#000;"><span style="display:inline-block;transform:scaleX(1.02);transform-origin:center top;">Cost</span></div><div class="t" style="left:-250.5px;width:600px;text-align:center;top:233px;font-family:'Liberation Serif', serif;font-size:12px;font-weight:bold;line-height:14px;color:#000;"><span style="display:inline-block;">I</span></div><div class="t" style="left:-105px;width:600px;text-align:center;top:233px;font-family:'Liberation Sans', sans-serif;font-size:11px;font-weight:bold;line-height:14px;color:#000;"><span style="display:inline-block;transform:scaleX(0.986);transform-origin:center top;">CLEARING AND LAY-OUT</span></div><div class="t" style="right:979px;top:233px;font-family:'Liberation Sans', sans-serif;font-size:11px;font-weight:bold;line-height:14px;color:#000;transform:scaleX(1.11);transform-origin:right top;">72.85</div><div class="t" style="left:138.5px;width:600px;text-align:center;top:233px;font-family:'Liberation Sans', sans-serif;font-size:11px;font-weight:bold;line-height:14px;color:#000;"><span style="display:inline-block;transform:scaleX(1.044);transform-origin:center top;">sq.m.</span></div><svg class="a" style="left:492.5px;top:235px;" width="9" height="11" viewBox="0 0 9 11"><path d="M0.5 1.5 H3.6 Q5.7 1.5 5.7 3.2 Q5.7 5 3.6 5 H0.5 M3.6 5 Q6.2 5 6.2 6.8 Q6.2 8.5 3.6 8.5 H0.5" fill="none" stroke="#000" stroke-width="1.7"/><path d="M1.9 0.3 V9.8" stroke="#000" stroke-width="1.7"/></svg><div class="t" style="right:806px;top:233px;font-family:'Liberation Sans', sans-serif;font-size:11px;font-weight:bold;line-height:14px;color:#000;transform:scaleX(1.11);transform-origin:right top;">121.48</div><svg class="a" style="left:569.0px;top:235px;" width="9" height="11" viewBox="0 0 9 11"><path d="M0.5 1.5 H3.6 Q5.7 1.5 5.7 3.2 Q5.7 5 3.6 5 H0.5 M3.6 5 Q6.2 5 6.2 6.8 Q6.2 8.5 3.6 8.5 H0.5" fill="none" stroke="#000" stroke-width="1.7"/><path d="M1.9 0.3 V9.8" stroke="#000" stroke-width="1.7"/></svg><div class="t" style="right:726px;top:233px;font-family:'Liberation Sans', sans-serif;font-size:11px;font-weight:bold;line-height:14px;color:#000;transform:scaleX(1.116);transform-origin:right top;">8,850.00</div><div class="t" style="left:-250.5px;width:600px;text-align:center;top:268px;font-family:'Liberation Sans', sans-serif;font-size:11px;font-weight:normal;line-height:14px;color:#000;"><span style="display:inline-block;transform:scaleX(0.975);transform-origin:center top;">A</span></div><div class="t" style="left:-104.5px;width:600px;text-align:center;top:267px;font-family:'Liberation Sans', sans-serif;font-size:11px;font-weight:normal;line-height:14px;color:#000;"><span style="display:inline-block;transform:scaleX(0.971);transform-origin:center top;">Material</span></div><div class="t" style="left:52.5px;width:600px;text-align:center;top:268px;font-family:'Liberation Sans', sans-serif;font-size:11px;font-weight:normal;line-height:14px;color:#000;"><span style="display:inline-block;transform:scaleX(1.03);transform-origin:center top;">Quantity</span></div><div class="t" style="left:138px;width:600px;text-align:center;top:268px;font-family:'Liberation Sans', sans-serif;font-size:11px;font-weight:normal;line-height:14px;color:#000;"><span style="display:inline-block;transform:scaleX(0.975);transform-origin:center top;">Unit</span></div><div class="t" style="left:224.5px;width:600px;text-align:center;top:268px;font-family:'Liberation Sans', sans-serif;font-size:11px;font-weight:normal;line-height:14px;color:#000;"><span style="display:inline-block;transform:scaleX(0.975);transform-origin:center top;">Unit Cost</span></div><div class="t" style="left:303.5px;width:600px;text-align:center;top:268px;font-family:'Liberation Sans', sans-serif;font-size:11px;font-weight:normal;line-height:14px;color:#000;"><span style="display:inline-block;transform:scaleX(0.975);transform-origin:center top;">Cost</span></div><div class="t" style="left:78.5px;top:282px;font-family:'Liberation Sans', sans-serif;font-size:11px;font-weight:normal;line-height:14px;color:#000;transform:scaleX(0.93);transform-origin:left top;">Coco Lumber 2"X2"X12'</div><div class="t" style="right:978.5px;top:282px;font-family:'Liberation Sans', sans-serif;font-size:11px;font-weight:normal;line-height:14px;color:#000;transform:scaleX(0.975);transform-origin:right top;">25.00</div><div class="t" style="left:138px;width:600px;text-align:center;top:282px;font-family:'Liberation Sans', sans-serif;font-size:11px;font-weight:normal;line-height:14px;color:#000;"><span style="display:inline-block;transform:scaleX(0.975);transform-origin:center top;">pc.</span></div><svg class="a" style="left:492.5px;top:284px;" width="9" height="11" viewBox="0 0 9 11"><path d="M0.5 1.5 H3.6 Q5.7 1.5 5.7 3.2 Q5.7 5 3.6 5 H0.5 M3.6 5 Q6.2 5 6.2 6.8 Q6.2 8.5 3.6 8.5 H0.5" fill="none" stroke="#000" stroke-width="1.25"/><path d="M1.9 0.3 V9.8" stroke="#000" stroke-width="1.25"/></svg><div class="t" style="right:809.5px;top:282px;font-family:'Liberation Sans', sans-serif;font-size:11px;font-weight:normal;line-height:14px;color:#000;transform:scaleX(0.975);transform-origin:right top;">106.00</div><svg class="a" style="left:569.0px;top:284px;" width="9" height="11" viewBox="0 0 9 11"><path d="M0.5 1.5 H3.6 Q5.7 1.5 5.7 3.2 Q5.7 5 3.6 5 H0.5 M3.6 5 Q6.2 5 6.2 6.8 Q6.2 8.5 3.6 8.5 H0.5" fill="none" stroke="#000" stroke-width="1.25"/><path d="M1.9 0.3 V9.8" stroke="#000" stroke-width="1.25"/></svg><div class="t" style="right:728.5px;top:282px;font-family:'Liberation Sans', sans-serif;font-size:11px;font-weight:normal;line-height:14px;color:#000;">2,650.00</div><div class="t" style="left:78.5px;top:295px;font-family:'Liberation Sans', sans-serif;font-size:11px;font-weight:normal;line-height:14px;color:#000;transform:scaleX(0.955);transform-origin:left top;">Nylon String #40</div><div class="t" style="right:978.5px;top:296px;font-family:'Liberation Sans', sans-serif;font-size:11px;font-weight:normal;line-height:14px;color:#000;transform:scaleX(0.975);transform-origin:right top;">10.00</div><div class="t" style="left:138px;width:600px;text-align:center;top:296px;font-family:'Liberation Sans', sans-serif;font-size:11px;font-weight:normal;line-height:14px;color:#000;"><span style="display:inline-block;transform:scaleX(0.975);transform-origin:center top;">roll</span></div><svg class="a" style="left:492.5px;top:298px;" width="9" height="11" viewBox="0 0 9 11"><path d="M0.5 1.5 H3.6 Q5.7 1.5 5.7 3.2 Q5.7 5 3.6 5 H0.5 M3.6 5 Q6.2 5 6.2 6.8 Q6.2 8.5 3.6 8.5 H0.5" fill="none" stroke="#000" stroke-width="1.25"/><path d="M1.9 0.3 V9.8" stroke="#000" stroke-width="1.25"/></svg><div class="t" style="right:809.5px;top:296px;font-family:'Liberation Sans', sans-serif;font-size:11px;font-weight:normal;line-height:14px;color:#000;transform:scaleX(0.975);transform-origin:right top;">160.00</div><svg class="a" style="left:569.0px;top:298px;" width="9" height="11" viewBox="0 0 9 11"><path d="M0.5 1.5 H3.6 Q5.7 1.5 5.7 3.2 Q5.7 5 3.6 5 H0.5 M3.6 5 Q6.2 5 6.2 6.8 Q6.2 8.5 3.6 8.5 H0.5" fill="none" stroke="#000" stroke-width="1.25"/><path d="M1.9 0.3 V9.8" stroke="#000" stroke-width="1.25"/></svg><div class="t" style="right:728.5px;top:296px;font-family:'Liberation Sans', sans-serif;font-size:11px;font-weight:normal;line-height:14px;color:#000;">1,600.00</div><div class="t" style="left:78.5px;top:309px;font-family:'Liberation Sans', sans-serif;font-size:11px;font-weight:normal;line-height:14px;color:#000;transform:scaleX(0.955);transform-origin:left top;">Common Wire Nail 1 1/2"</div><div class="t" style="right:978.5px;top:310px;font-family:'Liberation Sans', sans-serif;font-size:11px;font-weight:normal;line-height:14px;color:#000;transform:scaleX(0.975);transform-origin:right top;">5.00</div><div class="t" style="left:138px;width:600px;text-align:center;top:310px;font-family:'Liberation Sans', sans-serif;font-size:11px;font-weight:normal;line-height:14px;color:#000;"><span style="display:inline-block;transform:scaleX(0.975);transform-origin:center top;">kg.</span></div><svg class="a" style="left:492.5px;top:312px;" width="9" height="11" viewBox="0 0 9 11"><path d="M0.5 1.5 H3.6 Q5.7 1.5 5.7 3.2 Q5.7 5 3.6 5 H0.5 M3.6 5 Q6.2 5 6.2 6.8 Q6.2 8.5 3.6 8.5 H0.5" fill="none" stroke="#000" stroke-width="1.25"/><path d="M1.9 0.3 V9.8" stroke="#000" stroke-width="1.25"/></svg><div class="t" style="right:809.5px;top:310px;font-family:'Liberation Sans', sans-serif;font-size:11px;font-weight:normal;line-height:14px;color:#000;transform:scaleX(0.975);transform-origin:right top;">100.00</div><svg class="a" style="left:569.0px;top:312px;" width="9" height="11" viewBox="0 0 9 11"><path d="M0.5 1.5 H3.6 Q5.7 1.5 5.7 3.2 Q5.7 5 3.6 5 H0.5 M3.6 5 Q6.2 5 6.2 6.8 Q6.2 8.5 3.6 8.5 H0.5" fill="none" stroke="#000" stroke-width="1.25"/><path d="M1.9 0.3 V9.8" stroke="#000" stroke-width="1.25"/></svg><div class="t" style="right:728.5px;top:310px;font-family:'Liberation Sans', sans-serif;font-size:11px;font-weight:normal;line-height:14px;color:#000;">500.00</div><div class="t" style="right:805.5px;top:323px;font-family:'Liberation Sans', sans-serif;font-size:11px;font-weight:normal;line-height:14px;color:#000;transform:scaleX(0.975);transform-origin:right top;">Sub-Total</div><svg class="a" style="left:572.0px;top:326px;" width="9" height="11" viewBox="0 0 9 11"><path d="M0.5 1.5 H3.6 Q5.7 1.5 5.7 3.2 Q5.7 5 3.6 5 H0.5 M3.6 5 Q6.2 5 6.2 6.8 Q6.2 8.5 3.6 8.5 H0.5" fill="none" stroke="#000" stroke-width="1.7"/><path d="M1.9 0.3 V9.8" stroke="#000" stroke-width="1.7"/></svg><div class="t" style="right:728.5px;top:324px;font-family:'Liberation Sans', sans-serif;font-size:11px;font-weight:bold;line-height:14px;color:#000;transform:scaleX(1.13);transform-origin:right top;">4,750.00</div><div class="t" style="left:-250.5px;width:600px;text-align:center;top:352px;font-family:'Liberation Sans', sans-serif;font-size:11px;font-weight:normal;line-height:14px;color:#000;"><span style="display:inline-block;transform:scaleX(0.975);transform-origin:center top;">B</span></div><div class="t" style="left:-104.80000000000001px;width:600px;text-align:center;top:351px;font-family:'Liberation Sans', sans-serif;font-size:11px;font-weight:normal;line-height:14px;color:#000;"><span style="display:inline-block;transform:scaleX(0.969);transform-origin:center top;">Name and Capacity of Equipment</span></div><div class="t" style="left:51.69999999999999px;width:600px;text-align:center;top:352px;font-family:'Liberation Sans', sans-serif;font-size:11px;font-weight:normal;line-height:14px;color:#000;"><span style="display:inline-block;transform:scaleX(0.928);transform-origin:center top;">Number</span></div><div class="t" style="left:138px;width:600px;text-align:center;top:352px;font-family:'Liberation Sans', sans-serif;font-size:11px;font-weight:normal;line-height:14px;color:#000;"><span style="display:inline-block;transform:scaleX(0.975);transform-origin:center top;">No. of Days</span></div><div class="t" style="left:224.20000000000005px;width:600px;text-align:center;top:352px;font-family:'Liberation Sans', sans-serif;font-size:11px;font-weight:normal;line-height:14px;color:#000;"><span style="display:inline-block;transform:scaleX(0.975);transform-origin:center top;">Rate/Day</span></div><div class="t" style="left:303.5px;width:600px;text-align:center;top:352px;font-family:'Liberation Sans', sans-serif;font-size:11px;font-weight:normal;line-height:14px;color:#000;"><span style="display:inline-block;transform:scaleX(0.975);transform-origin:center top;">Cost</span></div><div class="t" style="right:808.5px;top:407px;font-family:'Liberation Sans', sans-serif;font-size:11px;font-weight:normal;line-height:14px;color:#000;transform:scaleX(0.975);transform-origin:right top;">Sub-Total</div><svg class="a" style="left:571.0px;top:410px;" width="9" height="11" viewBox="0 0 9 11"><path d="M0.5 1.5 H3.6 Q5.7 1.5 5.7 3.2 Q5.7 5 3.6 5 H0.5 M3.6 5 Q6.2 5 6.2 6.8 Q6.2 8.5 3.6 8.5 H0.5" fill="none" stroke="#000" stroke-width="1.7"/><path d="M1.9 0.3 V9.8" stroke="#000" stroke-width="1.7"/></svg><div class="t" style="right:743.5px;top:408px;font-family:'Liberation Sans', sans-serif;font-size:11px;font-weight:normal;line-height:14px;color:#000;transform:scaleX(0.975);transform-origin:right top;">-</div><div class="t" style="left:-250.5px;width:600px;text-align:center;top:443px;font-family:'Liberation Sans', sans-serif;font-size:11px;font-weight:normal;line-height:14px;color:#000;"><span style="display:inline-block;transform:scaleX(0.975);transform-origin:center top;">C</span></div><div class="t" style="left:-105px;width:600px;text-align:center;top:436px;font-family:'Liberation Sans', sans-serif;font-size:11px;font-weight:normal;line-height:14px;color:#000;"><span style="display:inline-block;transform:scaleX(0.975);transform-origin:center top;">Labor Derivation</span></div><div class="t" style="left:-105px;width:600px;text-align:center;top:450px;font-family:'Liberation Sans', sans-serif;font-size:11px;font-weight:normal;line-height:14px;color:#000;"><span style="display:inline-block;transform:scaleX(0.975);transform-origin:center top;">(Subsidiary Work Description)</span></div><div class="t" style="left:52.5px;width:600px;text-align:center;top:436px;font-family:'Liberation Sans', sans-serif;font-size:11px;font-weight:normal;line-height:14px;color:#000;"><span style="display:inline-block;">Quantity</span></div><div class="t" style="left:52.5px;width:600px;text-align:center;top:450px;font-family:'Liberation Sans', sans-serif;font-size:11px;font-weight:normal;line-height:14px;color:#000;"><span style="display:inline-block;transform:scaleX(0.975);transform-origin:center top;">Required</span></div><div class="t" style="left:137.8px;width:600px;text-align:center;top:436px;font-family:'Liberation Sans', sans-serif;font-size:11px;font-weight:normal;line-height:14px;color:#000;"><span style="display:inline-block;transform:scaleX(0.975);transform-origin:center top;">Manpower</span></div><div class="t" style="left:137.8px;width:600px;text-align:center;top:450px;font-family:'Liberation Sans', sans-serif;font-size:11px;font-weight:normal;line-height:14px;color:#000;"><span style="display:inline-block;transform:scaleX(0.975);transform-origin:center top;">Capability</span></div><div class="t" style="left:224.5px;width:600px;text-align:center;top:436px;font-family:'Liberation Sans', sans-serif;font-size:11px;font-weight:normal;line-height:14px;color:#000;"><span style="display:inline-block;transform:scaleX(0.975);transform-origin:center top;">No. of</span></div><div class="t" style="left:224.5px;width:600px;text-align:center;top:450px;font-family:'Liberation Sans', sans-serif;font-size:11px;font-weight:normal;line-height:14px;color:#000;"><span style="display:inline-block;transform:scaleX(0.975);transform-origin:center top;">Manpower</span></div><div class="t" style="left:303.29999999999995px;width:600px;text-align:center;top:436px;font-family:'Liberation Sans', sans-serif;font-size:11px;font-weight:normal;line-height:14px;color:#000;"><span style="display:inline-block;transform:scaleX(0.975);transform-origin:center top;">No. of Days to</span></div><div class="t" style="left:303.4px;width:600px;text-align:center;top:450px;font-family:'Liberation Sans', sans-serif;font-size:11px;font-weight:normal;line-height:14px;color:#000;"><span style="display:inline-block;transform:scaleX(0.975);transform-origin:center top;">Complete the</span></div><div class="t" style="left:81px;top:464px;font-family:'Liberation Sans', sans-serif;font-size:11px;font-weight:normal;line-height:14px;color:#000;">Clearing and Lay-out</div><div class="t" style="left:53px;width:600px;text-align:center;top:464px;font-family:'Liberation Sans', sans-serif;font-size:11px;font-weight:normal;line-height:14px;color:#000;"><span style="display:inline-block;transform:scaleX(0.975);transform-origin:center top;">72.85</span></div><div class="t" style="left:138px;width:600px;text-align:center;top:464px;font-family:'Liberation Sans', sans-serif;font-size:11px;font-weight:normal;line-height:14px;color:#000;"><span style="display:inline-block;transform:scaleX(0.975);transform-origin:center top;">100.00</span></div><div class="t" style="left:224.70000000000005px;width:600px;text-align:center;top:464px;font-family:'Liberation Sans', sans-serif;font-size:11px;font-weight:normal;line-height:14px;color:#000;"><span style="display:inline-block;transform:scaleX(0.975);transform-origin:center top;">10.00</span></div><div class="t" style="right:728.5px;top:464px;font-family:'Liberation Sans', sans-serif;font-size:11px;font-weight:normal;line-height:14px;color:#000;transform:scaleX(0.975);transform-origin:right top;">0.073</div><div class="t" style="left:52.5px;width:600px;text-align:center;top:478px;font-family:'Liberation Sans', sans-serif;font-size:11px;font-weight:normal;line-height:14px;color:#000;"><span style="display:inline-block;transform:scaleX(0.975);transform-origin:center top;">sq.m.</span></div><div class="t" style="left:138px;width:600px;text-align:center;top:478px;font-family:'Liberation Sans', sans-serif;font-size:11px;font-weight:normal;line-height:14px;color:#000;"><span style="display:inline-block;transform:scaleX(0.975);transform-origin:center top;">sq.m./man-day</span></div><div class="t" style="right:808.5px;top:491px;font-family:'Liberation Sans', sans-serif;font-size:11px;font-weight:normal;line-height:14px;color:#000;transform:scaleX(0.975);transform-origin:right top;">Sub-Total</div><div class="t" style="right:728.5px;top:492px;font-family:'Liberation Sans', sans-serif;font-size:11px;font-weight:bold;line-height:14px;color:#000;transform:scaleX(1.12);transform-origin:right top;">1.00</div><div class="t" style="left:-250.5px;width:600px;text-align:center;top:520px;font-family:'Liberation Sans', sans-serif;font-size:11px;font-weight:normal;line-height:14px;color:#000;"><span style="display:inline-block;transform:scaleX(0.975);transform-origin:center top;">D</span></div><div class="t" style="left:-105px;width:600px;text-align:center;top:519px;font-family:'Liberation Sans', sans-serif;font-size:11px;font-weight:normal;line-height:14px;color:#000;"><span style="display:inline-block;transform:scaleX(0.975);transform-origin:center top;">Freight and Handling</span></div><div class="t" style="left:52.5px;width:600px;text-align:center;top:520px;font-family:'Liberation Sans', sans-serif;font-size:11px;font-weight:normal;line-height:14px;color:#000;"><span style="display:inline-block;transform:scaleX(1.03);transform-origin:center top;">Quantity</span></div><div class="t" style="left:138px;width:600px;text-align:center;top:520px;font-family:'Liberation Sans', sans-serif;font-size:11px;font-weight:normal;line-height:14px;color:#000;"><span style="display:inline-block;transform:scaleX(0.975);transform-origin:center top;">Unit</span></div><div class="t" style="left:224.5px;width:600px;text-align:center;top:520px;font-family:'Liberation Sans', sans-serif;font-size:11px;font-weight:normal;line-height:14px;color:#000;"><span style="display:inline-block;transform:scaleX(0.975);transform-origin:center top;">Unit Cost</span></div><div class="t" style="left:303.5px;width:600px;text-align:center;top:520px;font-family:'Liberation Sans', sans-serif;font-size:11px;font-weight:normal;line-height:14px;color:#000;"><span style="display:inline-block;transform:scaleX(0.975);transform-origin:center top;">Cost</span></div><div class="t" style="right:808.5px;top:561px;font-family:'Liberation Sans', sans-serif;font-size:11px;font-weight:normal;line-height:14px;color:#000;transform:scaleX(0.975);transform-origin:right top;">Sub-Total</div><svg class="a" style="left:571.0px;top:564px;" width="9" height="11" viewBox="0 0 9 11"><path d="M0.5 1.5 H3.6 Q5.7 1.5 5.7 3.2 Q5.7 5 3.6 5 H0.5 M3.6 5 Q6.2 5 6.2 6.8 Q6.2 8.5 3.6 8.5 H0.5" fill="none" stroke="#000" stroke-width="1.7"/><path d="M1.9 0.3 V9.8" stroke="#000" stroke-width="1.7"/></svg><div class="t" style="right:743.5px;top:562px;font-family:'Liberation Sans', sans-serif;font-size:11px;font-weight:normal;line-height:14px;color:#000;transform:scaleX(0.975);transform-origin:right top;">-</div><div class="t" style="left:-250.5px;width:600px;text-align:center;top:590px;font-family:'Liberation Sans', sans-serif;font-size:11px;font-weight:normal;line-height:14px;color:#000;"><span style="display:inline-block;transform:scaleX(0.975);transform-origin:center top;">E</span></div><div class="t" style="left:-105px;width:600px;text-align:center;top:589px;font-family:'Liberation Sans', sans-serif;font-size:11px;font-weight:normal;line-height:14px;color:#000;"><span style="display:inline-block;transform:scaleX(0.975);transform-origin:center top;">Labor Requirment</span></div><div class="t" style="left:51.5px;width:600px;text-align:center;top:590px;font-family:'Liberation Sans', sans-serif;font-size:11px;font-weight:normal;line-height:14px;color:#000;"><span style="display:inline-block;transform:scaleX(0.928);transform-origin:center top;">Number</span></div><div class="t" style="left:138px;width:600px;text-align:center;top:590px;font-family:'Liberation Sans', sans-serif;font-size:11px;font-weight:normal;line-height:14px;color:#000;"><span style="display:inline-block;transform:scaleX(0.975);transform-origin:center top;">No. of Days</span></div><div class="t" style="left:224.20000000000005px;width:600px;text-align:center;top:590px;font-family:'Liberation Sans', sans-serif;font-size:11px;font-weight:normal;line-height:14px;color:#000;"><span style="display:inline-block;transform:scaleX(0.975);transform-origin:center top;">Rate/Day</span></div><div class="t" style="left:303.5px;width:600px;text-align:center;top:590px;font-family:'Liberation Sans', sans-serif;font-size:11px;font-weight:normal;line-height:14px;color:#000;"><span style="display:inline-block;transform:scaleX(0.975);transform-origin:center top;">Cost</span></div><div class="t" style="left:82px;top:603px;font-family:'Liberation Sans', sans-serif;font-size:11px;font-weight:normal;line-height:14px;color:#000;transform:scaleX(0.96);transform-origin:left top;">Project Supervisor</div><div class="t" style="right:982.5px;top:604px;font-family:'Liberation Sans', sans-serif;font-size:11px;font-weight:normal;line-height:14px;color:#000;transform:scaleX(0.975);transform-origin:right top;">1.00</div><div class="t" style="right:887.5px;top:604px;font-family:'Liberation Sans', sans-serif;font-size:11px;font-weight:normal;line-height:14px;color:#000;transform:scaleX(0.975);transform-origin:right top;">1.00</div><svg class="a" style="left:492.0px;top:606px;" width="9" height="11" viewBox="0 0 9 11"><path d="M0.5 1.5 H3.6 Q5.7 1.5 5.7 3.2 Q5.7 5 3.6 5 H0.5 M3.6 5 Q6.2 5 6.2 6.8 Q6.2 8.5 3.6 8.5 H0.5" fill="none" stroke="#000" stroke-width="1.25"/><path d="M1.9 0.3 V9.8" stroke="#000" stroke-width="1.25"/></svg><div class="t" style="right:809.5px;top:604px;font-family:'Liberation Sans', sans-serif;font-size:11px;font-weight:normal;line-height:14px;color:#000;transform:scaleX(0.975);transform-origin:right top;">600.00</div><svg class="a" style="left:570.5px;top:606px;" width="9" height="11" viewBox="0 0 9 11"><path d="M0.5 1.5 H3.6 Q5.7 1.5 5.7 3.2 Q5.7 5 3.6 5 H0.5 M3.6 5 Q6.2 5 6.2 6.8 Q6.2 8.5 3.6 8.5 H0.5" fill="none" stroke="#000" stroke-width="1.25"/><path d="M1.9 0.3 V9.8" stroke="#000" stroke-width="1.25"/></svg><div class="t" style="right:728.5px;top:604px;font-family:'Liberation Sans', sans-serif;font-size:11px;font-weight:normal;line-height:14px;color:#000;">600.00</div><div class="t" style="left:82px;top:618px;font-family:'Liberation Sans', sans-serif;font-size:11px;font-weight:normal;line-height:14px;color:#000;transform:scaleX(0.96);transform-origin:left top;">Laborer (Men)</div><div class="t" style="right:982.5px;top:618px;font-family:'Liberation Sans', sans-serif;font-size:11px;font-weight:normal;line-height:14px;color:#000;transform:scaleX(0.975);transform-origin:right top;">6.00</div><div class="t" style="right:887.5px;top:618px;font-family:'Liberation Sans', sans-serif;font-size:11px;font-weight:normal;line-height:14px;color:#000;transform:scaleX(0.975);transform-origin:right top;">1.00</div><svg class="a" style="left:492.0px;top:620px;" width="9" height="11" viewBox="0 0 9 11"><path d="M0.5 1.5 H3.6 Q5.7 1.5 5.7 3.2 Q5.7 5 3.6 5 H0.5 M3.6 5 Q6.2 5 6.2 6.8 Q6.2 8.5 3.6 8.5 H0.5" fill="none" stroke="#000" stroke-width="1.25"/><path d="M1.9 0.3 V9.8" stroke="#000" stroke-width="1.25"/></svg><div class="t" style="right:809.5px;top:618px;font-family:'Liberation Sans', sans-serif;font-size:11px;font-weight:normal;line-height:14px;color:#000;transform:scaleX(0.975);transform-origin:right top;">350.00</div><svg class="a" style="left:570.5px;top:620px;" width="9" height="11" viewBox="0 0 9 11"><path d="M0.5 1.5 H3.6 Q5.7 1.5 5.7 3.2 Q5.7 5 3.6 5 H0.5 M3.6 5 Q6.2 5 6.2 6.8 Q6.2 8.5 3.6 8.5 H0.5" fill="none" stroke="#000" stroke-width="1.25"/><path d="M1.9 0.3 V9.8" stroke="#000" stroke-width="1.25"/></svg><div class="t" style="right:728.5px;top:618px;font-family:'Liberation Sans', sans-serif;font-size:11px;font-weight:normal;line-height:14px;color:#000;">2,100.00</div><div class="t" style="left:82px;top:631px;font-family:'Liberation Sans', sans-serif;font-size:11px;font-weight:normal;line-height:14px;color:#000;transform:scaleX(0.96);transform-origin:left top;">Laborer (Women)</div><div class="t" style="right:982.5px;top:632px;font-family:'Liberation Sans', sans-serif;font-size:11px;font-weight:normal;line-height:14px;color:#000;transform:scaleX(0.975);transform-origin:right top;">4.00</div><div class="t" style="right:887.5px;top:632px;font-family:'Liberation Sans', sans-serif;font-size:11px;font-weight:normal;line-height:14px;color:#000;transform:scaleX(0.975);transform-origin:right top;">1.00</div><svg class="a" style="left:492.0px;top:634px;" width="9" height="11" viewBox="0 0 9 11"><path d="M0.5 1.5 H3.6 Q5.7 1.5 5.7 3.2 Q5.7 5 3.6 5 H0.5 M3.6 5 Q6.2 5 6.2 6.8 Q6.2 8.5 3.6 8.5 H0.5" fill="none" stroke="#000" stroke-width="1.25"/><path d="M1.9 0.3 V9.8" stroke="#000" stroke-width="1.25"/></svg><div class="t" style="right:809.5px;top:632px;font-family:'Liberation Sans', sans-serif;font-size:11px;font-weight:normal;line-height:14px;color:#000;transform:scaleX(0.975);transform-origin:right top;">350.00</div><svg class="a" style="left:570.5px;top:634px;" width="9" height="11" viewBox="0 0 9 11"><path d="M0.5 1.5 H3.6 Q5.7 1.5 5.7 3.2 Q5.7 5 3.6 5 H0.5 M3.6 5 Q6.2 5 6.2 6.8 Q6.2 8.5 3.6 8.5 H0.5" fill="none" stroke="#000" stroke-width="1.25"/><path d="M1.9 0.3 V9.8" stroke="#000" stroke-width="1.25"/></svg><div class="t" style="right:728.5px;top:632px;font-family:'Liberation Sans', sans-serif;font-size:11px;font-weight:normal;line-height:14px;color:#000;">1,400.00</div><div class="t" style="right:808.5px;top:659px;font-family:'Liberation Sans', sans-serif;font-size:11px;font-weight:normal;line-height:14px;color:#000;transform:scaleX(0.975);transform-origin:right top;">Sub-Total</div><svg class="a" style="left:571.5px;top:662px;" width="9" height="11" viewBox="0 0 9 11"><path d="M0.5 1.5 H3.6 Q5.7 1.5 5.7 3.2 Q5.7 5 3.6 5 H0.5 M3.6 5 Q6.2 5 6.2 6.8 Q6.2 8.5 3.6 8.5 H0.5" fill="none" stroke="#000" stroke-width="1.7"/><path d="M1.9 0.3 V9.8" stroke="#000" stroke-width="1.7"/></svg><div class="t" style="right:729.2px;top:660px;font-family:'Liberation Sans', sans-serif;font-size:11px;font-weight:bold;line-height:14px;color:#000;transform:scaleX(1.13);transform-origin:right top;">4,100.00</div><div class="t" style="right:804.5px;top:687px;font-family:'Liberation Sans', sans-serif;font-size:11px;font-weight:bold;line-height:14px;color:#000;transform:scaleX(1.03);transform-origin:right top;">SUB-TOTAL, ITEM NO. I</div><svg class="a" style="left:571.5px;top:690px;" width="9" height="11" viewBox="0 0 9 11"><path d="M0.5 1.5 H3.6 Q5.7 1.5 5.7 3.2 Q5.7 5 3.6 5 H0.5 M3.6 5 Q6.2 5 6.2 6.8 Q6.2 8.5 3.6 8.5 H0.5" fill="none" stroke="#000" stroke-width="1.7"/><path d="M1.9 0.3 V9.8" stroke="#000" stroke-width="1.7"/></svg><div class="t" style="right:729.5px;top:688px;font-family:'Liberation Sans', sans-serif;font-size:11px;font-weight:bold;line-height:14px;color:#000;transform:scaleX(1.13);transform-origin:right top;">8,850.00</div><div class="t" style="right:648.5px;top:688px;font-family:'Liberation Sans', sans-serif;font-size:11px;font-weight:normal;line-height:14px;color:#000;transform:scaleX(1.04);transform-origin:right top;">8,850.00</div><div class="a" style="left:22px;top:125px;width:2px;height:578px;background:#0000c4;"></div><div class="a" style="left:643px;top:125px;width:3px;height:578px;background:#0000c4;"></div><div class="a" style="left:22px;top:700px;width:624px;height:3px;background:#0000c4;"></div><div class="t" style="left:225.5px;top:359px;font-family:'Liberation Sans', sans-serif;font-size:70px;font-weight:normal;line-height:70px;color:#8c8c8c;-webkit-text-stroke:0.4px #8c8c8c;letter-spacing:-0.5px;">Page</div><svg class="a" style="left:405px;top:365px;" width="30" height="56" viewBox="0 0 30 56"><path d="M21.7 4.2 H24.6 V53 H18.4 V16.6 L6.7 21.9 V16.4 Z" fill="#8c8c8c"/></svg><div class="a" style="left:389px;top:364px;width:98px;height:17px;border:2px solid #217346;box-sizing:border-box;"></div><div class="a" style="left:391px;top:366px;width:94px;height:13px;border:1px solid #ffffff;box-sizing:border-box;"></div><div class="a" style="left:482px;top:377px;width:6px;height:5px;background:#217346;outline:1px solid #fff;"></div><div class="a" style="left:1345px;top:108px;width:21px;height:608px;background:#e6e6e6;"></div><div class="a" style="left:1348px;top:112px;width:15px;height:15px;background:#ffffff;border:1px solid #c6c6c6;box-sizing:border-box;"></div><svg class="a" style="left:1351px;top:116px;" width="9" height="6" viewBox="0 0 9 6"><path d="M0.5 5.5 L4.5 0.5 L8.5 5.5 Z" fill="#777"/></svg><div class="a" style="left:1348px;top:127px;width:15px;height:575px;background:#dcdcdc;"></div><div class="a" style="left:1348px;top:150px;width:15px;height:461px;background:#ffffff;border:1px solid #c6c6c6;box-sizing:border-box;"></div><div class="a" style="left:1348px;top:702px;width:15px;height:15px;background:#ffffff;border:1px solid #c6c6c6;box-sizing:border-box;"></div><svg class="a" style="left:1351px;top:707px;" width="9" height="6" viewBox="0 0 9 6"><path d="M0.5 0.5 L4.5 5.5 L8.5 0.5 Z" fill="#777"/></svg><div class="a" style="left:0px;top:717px;width:1366px;height:27px;background:#e6e6e6;"></div><svg class="a" style="left:26px;top:725px;" width="6" height="9" viewBox="0 0 6 9"><path d="M5.5 0.5 V8.5 L0.5 4.5 Z" fill="#217346"/></svg><svg class="a" style="left:55px;top:725px;" width="6" height="9" viewBox="0 0 6 9"><path d="M0.5 0.5 V8.5 L5.5 4.5 Z" fill="#217346"/></svg><div class="a" style="left:81px;top:730px;width:2px;height:2px;background:#1f4e3d;"></div><div class="a" style="left:85px;top:730px;width:2px;height:2px;background:#1f4e3d;"></div><div class="a" style="left:89px;top:730px;width:2px;height:2px;background:#1f4e3d;"></div><div class="a" style="left:100px;top:719px;width:1px;height:22px;background:#c8c8c8;"></div><div class="a" style="left:103px;top:719px;width:71px;height:22px;background:#ff0000;"></div><div class="t" style="left:-161.5px;width:600px;text-align:center;top:723px;font-family:'Liberation Sans', sans-serif;font-size:13px;font-weight:normal;line-height:14px;color:#fff;"><span style="display:inline-block;transform:scaleX(0.89);transform-origin:center top;">ECPP (3)</span></div><div class="a" style="left:176px;top:719px;width:1px;height:22px;background:#c8c8c8;"></div><div class="a" style="left:179px;top:719px;width:71px;height:22px;background:#ff0000;"></div><div class="t" style="left:-85.5px;width:600px;text-align:center;top:723px;font-family:'Liberation Sans', sans-serif;font-size:13px;font-weight:normal;line-height:14px;color:#fff;"><span style="display:inline-block;transform:scaleX(0.89);transform-origin:center top;">ECPP (2)</span></div><div class="a" style="left:252px;top:719px;width:1px;height:22px;background:#c8c8c8;"></div><div class="a" style="left:255px;top:719px;width:51px;height:22px;background:#00b050;"></div><div class="t" style="left:-19.5px;width:600px;text-align:center;top:723px;font-family:'Liberation Sans', sans-serif;font-size:13px;font-weight:normal;line-height:14px;color:#000;"><span style="display:inline-block;transform:scaleX(0.89);transform-origin:center top;">POW</span></div><div class="a" style="left:308px;top:719px;width:1px;height:22px;background:#c8c8c8;"></div><div class="a" style="left:310px;top:719px;width:49px;height:22px;background:#0070c0;"></div><div class="t" style="left:34.5px;width:600px;text-align:center;top:723px;font-family:'Liberation Sans', sans-serif;font-size:13px;font-weight:normal;line-height:14px;color:#fff;"><span style="display:inline-block;transform:scaleX(0.89);transform-origin:center top;">Spl 1</span></div><div class="a" style="left:361px;top:719px;width:1px;height:22px;background:#c8c8c8;"></div><div class="a" style="left:361px;top:716px;width:29px;height:25px;background:linear-gradient(#ffffff 10%,#c9d9ea);"></div><div class="a" style="left:361px;top:739px;width:29px;height:2px;background:#217346;"></div><div class="t" style="left:75.5px;width:600px;text-align:center;top:722px;font-family:'Liberation Sans', sans-serif;font-size:13px;font-weight:bold;line-height:14px;color:#1d5e3b;"><span style="display:inline-block;">I</span></div><div class="a" style="left:392px;top:719px;width:1px;height:22px;background:#c8c8c8;"></div><div class="a" style="left:392px;top:719px;width:27px;height:22px;background:#0070c0;"></div><div class="t" style="left:105.5px;width:600px;text-align:center;top:723px;font-family:'Liberation Sans', sans-serif;font-size:13px;font-weight:normal;line-height:14px;color:#fff;"><span style="display:inline-block;transform:scaleX(0.89);transform-origin:center top;">II</span></div><div class="a" style="left:421px;top:719px;width:1px;height:22px;background:#c8c8c8;"></div><div class="a" style="left:424px;top:719px;width:31px;height:22px;background:#0070c0;"></div><div class="t" style="left:139.5px;width:600px;text-align:center;top:723px;font-family:'Liberation Sans', sans-serif;font-size:13px;font-weight:normal;line-height:14px;color:#fff;"><span style="display:inline-block;transform:scaleX(0.89);transform-origin:center top;">III</span></div><div class="a" style="left:457px;top:719px;width:1px;height:22px;background:#c8c8c8;"></div><div class="a" style="left:460px;top:719px;width:32px;height:22px;background:#0070c0;"></div><div class="t" style="left:176.0px;width:600px;text-align:center;top:723px;font-family:'Liberation Sans', sans-serif;font-size:13px;font-weight:normal;line-height:14px;color:#fff;"><span style="display:inline-block;transform:scaleX(0.89);transform-origin:center top;">IV</span></div><div class="a" style="left:494px;top:719px;width:1px;height:22px;background:#c8c8c8;"></div><div class="a" style="left:497px;top:719px;width:28px;height:22px;background:#0070c0;"></div><div class="t" style="left:211.0px;width:600px;text-align:center;top:723px;font-family:'Liberation Sans', sans-serif;font-size:13px;font-weight:normal;line-height:14px;color:#fff;"><span style="display:inline-block;transform:scaleX(0.89);transform-origin:center top;">V</span></div><div class="a" style="left:527px;top:719px;width:1px;height:22px;background:#c8c8c8;"></div><div class="a" style="left:530px;top:719px;width:32px;height:22px;background:#0070c0;"></div><div class="t" style="left:246.0px;width:600px;text-align:center;top:723px;font-family:'Liberation Sans', sans-serif;font-size:13px;font-weight:normal;line-height:14px;color:#fff;"><span style="display:inline-block;transform:scaleX(0.89);transform-origin:center top;">VI</span></div><div class="a" style="left:564px;top:719px;width:1px;height:22px;background:#c8c8c8;"></div><div class="a" style="left:567px;top:719px;width:36px;height:22px;background:#0070c0;"></div><div class="t" style="left:285.0px;width:600px;text-align:center;top:723px;font-family:'Liberation Sans', sans-serif;font-size:13px;font-weight:normal;line-height:14px;color:#fff;"><span style="display:inline-block;transform:scaleX(0.89);transform-origin:center top;">VII</span></div><div class="a" style="left:605px;top:719px;width:1px;height:22px;background:#c8c8c8;"></div><div class="a" style="left:608px;top:719px;width:40px;height:22px;background:#0070c0;"></div><div class="t" style="left:328.0px;width:600px;text-align:center;top:723px;font-family:'Liberation Sans', sans-serif;font-size:13px;font-weight:normal;line-height:14px;color:#fff;"><span style="display:inline-block;transform:scaleX(0.89);transform-origin:center top;">VIII</span></div><div class="a" style="left:650px;top:719px;width:1px;height:22px;background:#c8c8c8;"></div><div class="a" style="left:653px;top:719px;width:32px;height:22px;background:#0070c0;"></div><div class="t" style="left:369.0px;width:600px;text-align:center;top:723px;font-family:'Liberation Sans', sans-serif;font-size:13px;font-weight:normal;line-height:14px;color:#fff;"><span style="display:inline-block;transform:scaleX(0.89);transform-origin:center top;">IX</span></div><div class="a" style="left:687px;top:719px;width:1px;height:22px;background:#c8c8c8;"></div><div class="a" style="left:690px;top:719px;width:28px;height:22px;background:#0070c0;"></div><div class="t" style="left:404.0px;width:600px;text-align:center;top:723px;font-family:'Liberation Sans', sans-serif;font-size:13px;font-weight:normal;line-height:14px;color:#fff;"><span style="display:inline-block;transform:scaleX(0.89);transform-origin:center top;">X</span></div><div class="a" style="left:720px;top:719px;width:1px;height:22px;background:#c8c8c8;"></div><div class="a" style="left:723px;top:719px;width:32px;height:22px;background:#0070c0;"></div><div class="t" style="left:439.0px;width:600px;text-align:center;top:723px;font-family:'Liberation Sans', sans-serif;font-size:13px;font-weight:normal;line-height:14px;color:#fff;"><span style="display:inline-block;transform:scaleX(0.89);transform-origin:center top;">XI</span></div><div class="a" style="left:757px;top:719px;width:1px;height:22px;background:#c8c8c8;"></div><div class="a" style="left:760px;top:719px;width:36px;height:22px;background:#0070c0;"></div><div class="t" style="left:478.0px;width:600px;text-align:center;top:723px;font-family:'Liberation Sans', sans-serif;font-size:13px;font-weight:normal;line-height:14px;color:#fff;"><span style="display:inline-block;transform:scaleX(0.89);transform-origin:center top;">XII</span></div><div class="a" style="left:798px;top:719px;width:1px;height:22px;background:#c8c8c8;"></div><div class="a" style="left:801px;top:719px;width:40px;height:22px;background:#0070c0;"></div><div class="t" style="left:521.0px;width:600px;text-align:center;top:723px;font-family:'Liberation Sans', sans-serif;font-size:13px;font-weight:normal;line-height:14px;color:#fff;"><span style="display:inline-block;transform:scaleX(0.89);transform-origin:center top;">XIII</span></div><div class="a" style="left:843px;top:719px;width:1px;height:22px;background:#c8c8c8;"></div><div class="a" style="left:846px;top:719px;width:41px;height:22px;background:#0070c0;"></div><div class="t" style="left:566.5px;width:600px;text-align:center;top:723px;font-family:'Liberation Sans', sans-serif;font-size:13px;font-weight:normal;line-height:14px;color:#fff;"><span style="display:inline-block;transform:scaleX(0.89);transform-origin:center top;">XIV</span></div><div class="a" style="left:889px;top:719px;width:1px;height:22px;background:#c8c8c8;"></div><div class="a" style="left:892px;top:719px;width:49px;height:22px;background:#0070c0;"></div><div class="t" style="left:616.5px;width:600px;text-align:center;top:723px;font-family:'Liberation Sans', sans-serif;font-size:13px;font-weight:normal;line-height:14px;color:#fff;"><span style="display:inline-block;transform:scaleX(0.89);transform-origin:center top;">Spl 2</span></div><div class="a" style="left:943px;top:719px;width:1px;height:22px;background:#c8c8c8;"></div><div class="a" style="left:946px;top:719px;width:41px;height:22px;background:#00b050;"></div><div class="t" style="left:666.5px;width:600px;text-align:center;top:723px;font-family:'Liberation Sans', sans-serif;font-size:13px;font-weight:normal;line-height:14px;color:#000;"><span style="display:inline-block;transform:scaleX(0.89);transform-origin:center top;">IDC</span></div><div class="a" style="left:989px;top:719px;width:1px;height:22px;background:#c8c8c8;"></div><div class="a" style="left:992px;top:719px;width:47px;height:22px;background:#ff0000;"></div><div class="t" style="left:715.5px;width:600px;text-align:center;top:723px;font-family:'Liberation Sans', sans-serif;font-size:13px;font-weight:normal;line-height:14px;color:#fff;"><span style="display:inline-block;transform:scaleX(0.89);transform-origin:center top;">QTO</span></div><div class="a" style="left:1041px;top:719px;width:1px;height:22px;background:#c8c8c8;"></div><div class="a" style="left:1044px;top:719px;width:46px;height:22px;background:#ff0000;"></div><div class="t" style="left:767.0px;width:600px;text-align:center;top:723px;font-family:'Liberation Sans', sans-serif;font-size:13px;font-weight:normal;line-height:14px;color:#fff;"><span style="display:inline-block;transform:scaleX(0.89);transform-origin:center top;">G&amp;S</span></div><div class="a" style="left:1092px;top:719px;width:1px;height:22px;background:#c8c8c8;"></div><div class="a" style="left:1095px;top:719px;width:46px;height:22px;background:#ff0000;"></div><div class="t" style="left:818.0px;width:600px;text-align:center;top:723px;font-family:'Liberation Sans', sans-serif;font-size:13px;font-weight:normal;line-height:14px;color:#fff;"><span style="display:inline-block;transform:scaleX(0.89);transform-origin:center top;">MPS</span></div><div class="a" style="left:1143px;top:719px;width:1px;height:22px;background:#c8c8c8;"></div><div class="a" style="left:1146px;top:719px;width:30px;height:22px;background:#ff0000;"></div><div class="a" style="left:1146px;top:719px;width:30px;height:22px;overflow:hidden;"><div class="t" style="left:8px;top:3px;font-size:13px;line-height:14px;color:#fff;transform:scaleX(0.93);transform-origin:left top;">EQS</div></div><div class="a" style="left:1185px;top:730px;width:2px;height:2px;background:#1f4e3d;"></div><div class="a" style="left:1189px;top:730px;width:2px;height:2px;background:#1f4e3d;"></div><div class="a" style="left:1193px;top:730px;width:2px;height:2px;background:#1f4e3d;"></div><svg class="a" style="left:1208px;top:721px;" width="18" height="18" viewBox="0 0 18 18"><circle cx="9" cy="9" r="7.8" fill="none" stroke="#666" stroke-width="1.2"/><path d="M9 4.5 V13.5 M4.5 9 H13.5" stroke="#666" stroke-width="1.6"/></svg><div class="a" style="left:1245px;top:724px;width:2px;height:2px;background:#a0a0a0;"></div><div class="a" style="left:1245px;top:729px;width:2px;height:2px;background:#a0a0a0;"></div><div class="a" style="left:1245px;top:734px;width:2px;height:2px;background:#a0a0a0;"></div><div class="a" style="left:1262px;top:723px;width:15px;height:15px;background:#ffffff;border:1px solid #c6c6c6;box-sizing:border-box;"></div><svg class="a" style="left:1266px;top:726px;" width="6" height="9" viewBox="0 0 6 9"><path d="M5.5 0.5 V8.5 L0.5 4.5 Z" fill="#555"/></svg><div class="a" style="left:1277px;top:723px;width:49px;height:15px;background:#ffffff;border:1px solid #c6c6c6;box-sizing:border-box;"></div><div class="a" style="left:1330px;top:723px;width:15px;height:15px;background:#ffffff;border:1px solid #c6c6c6;box-sizing:border-box;"></div><svg class="a" style="left:1335px;top:726px;" width="6" height="9" viewBox="0 0 6 9"><path d="M0.5 0.5 V8.5 L5.5 4.5 Z" fill="#555"/></svg><div class="a" style="left:0px;top:744px;width:1366px;height:21px;background:#f3f2f1;"></div><div class="t" style="left:7px;top:749px;font-family:'Liberation Sans', sans-serif;font-size:12px;font-weight:normal;line-height:14px;color:#444;transform:scaleX(0.885);transform-origin:left top;">Ready</div><svg class="a" style="left:50px;top:744px;" width="24" height="21" viewBox="0 0 24 21"><path d="M11.5 5.4 Q 8.5 6.5 7.2 9.5 M7.3 11.5 Q 8.5 15.5 12.6 16.5" fill="none" stroke="#3c3c3c" stroke-width="1.3"/><path d="M13.5 4 V9.5" stroke="#3c3c3c" stroke-width="1.2"/><path d="M11.6 9 L15.4 9 L13.5 11.2 Z" fill="#3c3c3c"/><path d="M18.6 7.8 L20.1 9.3 L18.6 10.8 L17.1 9.3 Z" fill="#3c3c3c"/><path d="M15.5 11.5 L21.8 17.5 M21.8 11.5 L15.5 17.5" stroke="#3c3c3c" stroke-width="1.2"/></svg><div class="t" style="left:76px;top:749px;font-family:'Liberation Sans', sans-serif;font-size:12px;font-weight:normal;line-height:14px;color:#444;transform:scaleX(0.942);transform-origin:left top;">Accessibility: Investigate</div><svg class="a" style="left:1078px;top:747px;" width="15" height="15" viewBox="0 0 15 15"><rect x="1.75" y="1.75" width="11.5" height="11.5" fill="none" stroke="#444" stroke-width="1.5"/><path d="M5.5 1 V14 M9.5 1 V14 M1 5.5 H14 M1 9.5 H14" stroke="#444" stroke-width="1.4"/></svg><svg class="a" style="left:1118px;top:747px;" width="16" height="15" viewBox="0 0 16 15"><rect x="1.75" y="1.75" width="12" height="11.5" fill="none" stroke="#444" stroke-width="1.5"/><rect x="4.5" y="3.8" width="6.5" height="7.5" fill="none" stroke="#444" stroke-width="1.3"/><path d="M6 6 H9.5 M6 7.8 H9.5 M6 9.6 H9.5" stroke="#444" stroke-width="0.9"/></svg><div class="a" style="left:1146px;top:744px;width:40px;height:21px;background:#d2d2d2;"></div><svg class="a" style="left:1158px;top:747px;" width="16" height="15" viewBox="0 0 16 15"><rect x="1.75" y="1.75" width="12" height="11.5" fill="none" stroke="#444" stroke-width="1.5"/><path d="M5.3 1.5 V8.3 H9.6 V1.5 M1.5 9.4 H5.3" fill="none" stroke="#444" stroke-width="1.3"/></svg><div class="a" style="left:1193px;top:755px;width:8px;height:1px;background:#444;"></div><div class="a" style="left:1205px;top:755px;width:100px;height:1px;background:#a8a8a8;"></div><div class="a" style="left:1245px;top:750px;width:5px;height:11px;background:#6e6e6e;"></div><div class="a" style="left:1255px;top:752px;width:1px;height:7px;background:#a8a8a8;"></div><div class="a" style="left:1310px;top:755px;width:8px;height:1px;background:#444;"></div><div class="a" style="left:1313.5px;top:751px;width:1px;height:9px;background:#444;"></div><div class="t" style="left:1331px;top:749px;font-family:'Liberation Sans', sans-serif;font-size:12px;font-weight:normal;line-height:14px;color:#444;transform:scaleX(0.87);transform-origin:left top;">85%</div><div class="a" style="left:0px;top:765px;width:1366px;height:2px;background:#3a3a3a;"></div><div class="a" style="left:784px;top:765px;width:36px;height:2px;background:#c87a3c;"></div><div class="a" style="left:820px;top:765px;width:37px;height:2px;background:#777777;"></div>
</body></html>
